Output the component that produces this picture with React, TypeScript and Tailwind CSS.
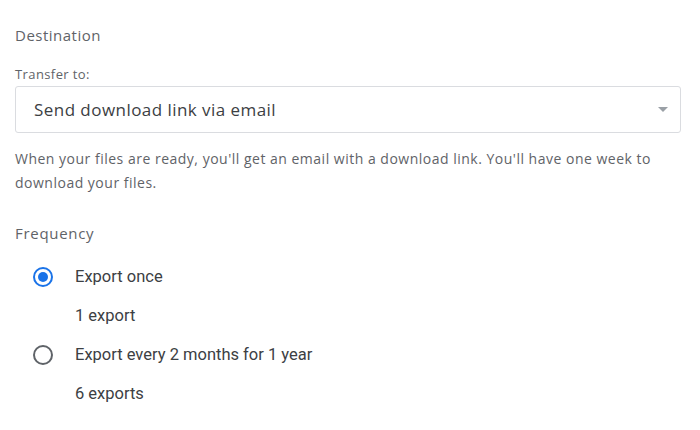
export default function App() {
  const options = [
    { label: "Export once", sub: "1 export", checked: true },
    { label: "Export every 2 months for 1 year", sub: "6 exports", checked: false },
  ];

  return (
    <div className="w-[700px] h-[430px] bg-white pl-[15px] pr-[19px] pt-[25px] font-['Open_Sans',sans-serif] text-[#5f6368]">
      <div className="text-[15px] leading-[20px] font-medium tracking-[0.5px]">Destination</div>

      <div className="mt-[21px] text-[13px] leading-[16px] tracking-[0.4px]">Transfer to:</div>
      <div className="mt-[4px] h-[47px] border border-[#dadce0] rounded-[3px] flex items-center justify-between pl-[18px] pr-[10px]">
        <span className="text-[17px] tracking-[0.45px] text-[#3c4043]">Send download link via email</span>
        <svg width="14" height="14" viewBox="0 0 14 14" className="-mt-[1px]">
          <path d="M2 5h10l-5 5z" fill="#9aa0a6" />
        </svg>
      </div>

      <p className="mt-[14px] text-[14px] leading-[24px] tracking-[0.5px]">
        When your files are ready, you'll get an email with a download link. You'll have one week to download your files.
      </p>

      <div className="mt-[28px] text-[15px] leading-[20px] font-medium tracking-[0.7px]">Frequency</div>

      <div className="mt-[24px] font-['Roboto',sans-serif] text-[16.5px] text-[#3c4043]">
        {options.map((o) => (
          <div key={o.label} className="mb-[19px]">
            <div className="flex items-center h-[20px]">
              <div className="w-[20px] ml-[18px] mr-[22px] flex items-center justify-center">
                {o.checked ? (
                  <div className="w-[20px] h-[20px] rounded-full border-2 border-[#1a73e8] flex items-center justify-center">
                    <div className="w-[10px] h-[10px] rounded-full bg-[#1a73e8]" />
                  </div>
                ) : (
                  <div className="w-[20px] h-[20px] rounded-full border-2 border-[#5f6368]" />
                )}
              </div>
              <span>{o.label}</span>
            </div>
            <div className="mt-[19px] ml-[60px] leading-[20px]">{o.sub}</div>
          </div>
        ))}
      </div>
    </div>
  );
}
